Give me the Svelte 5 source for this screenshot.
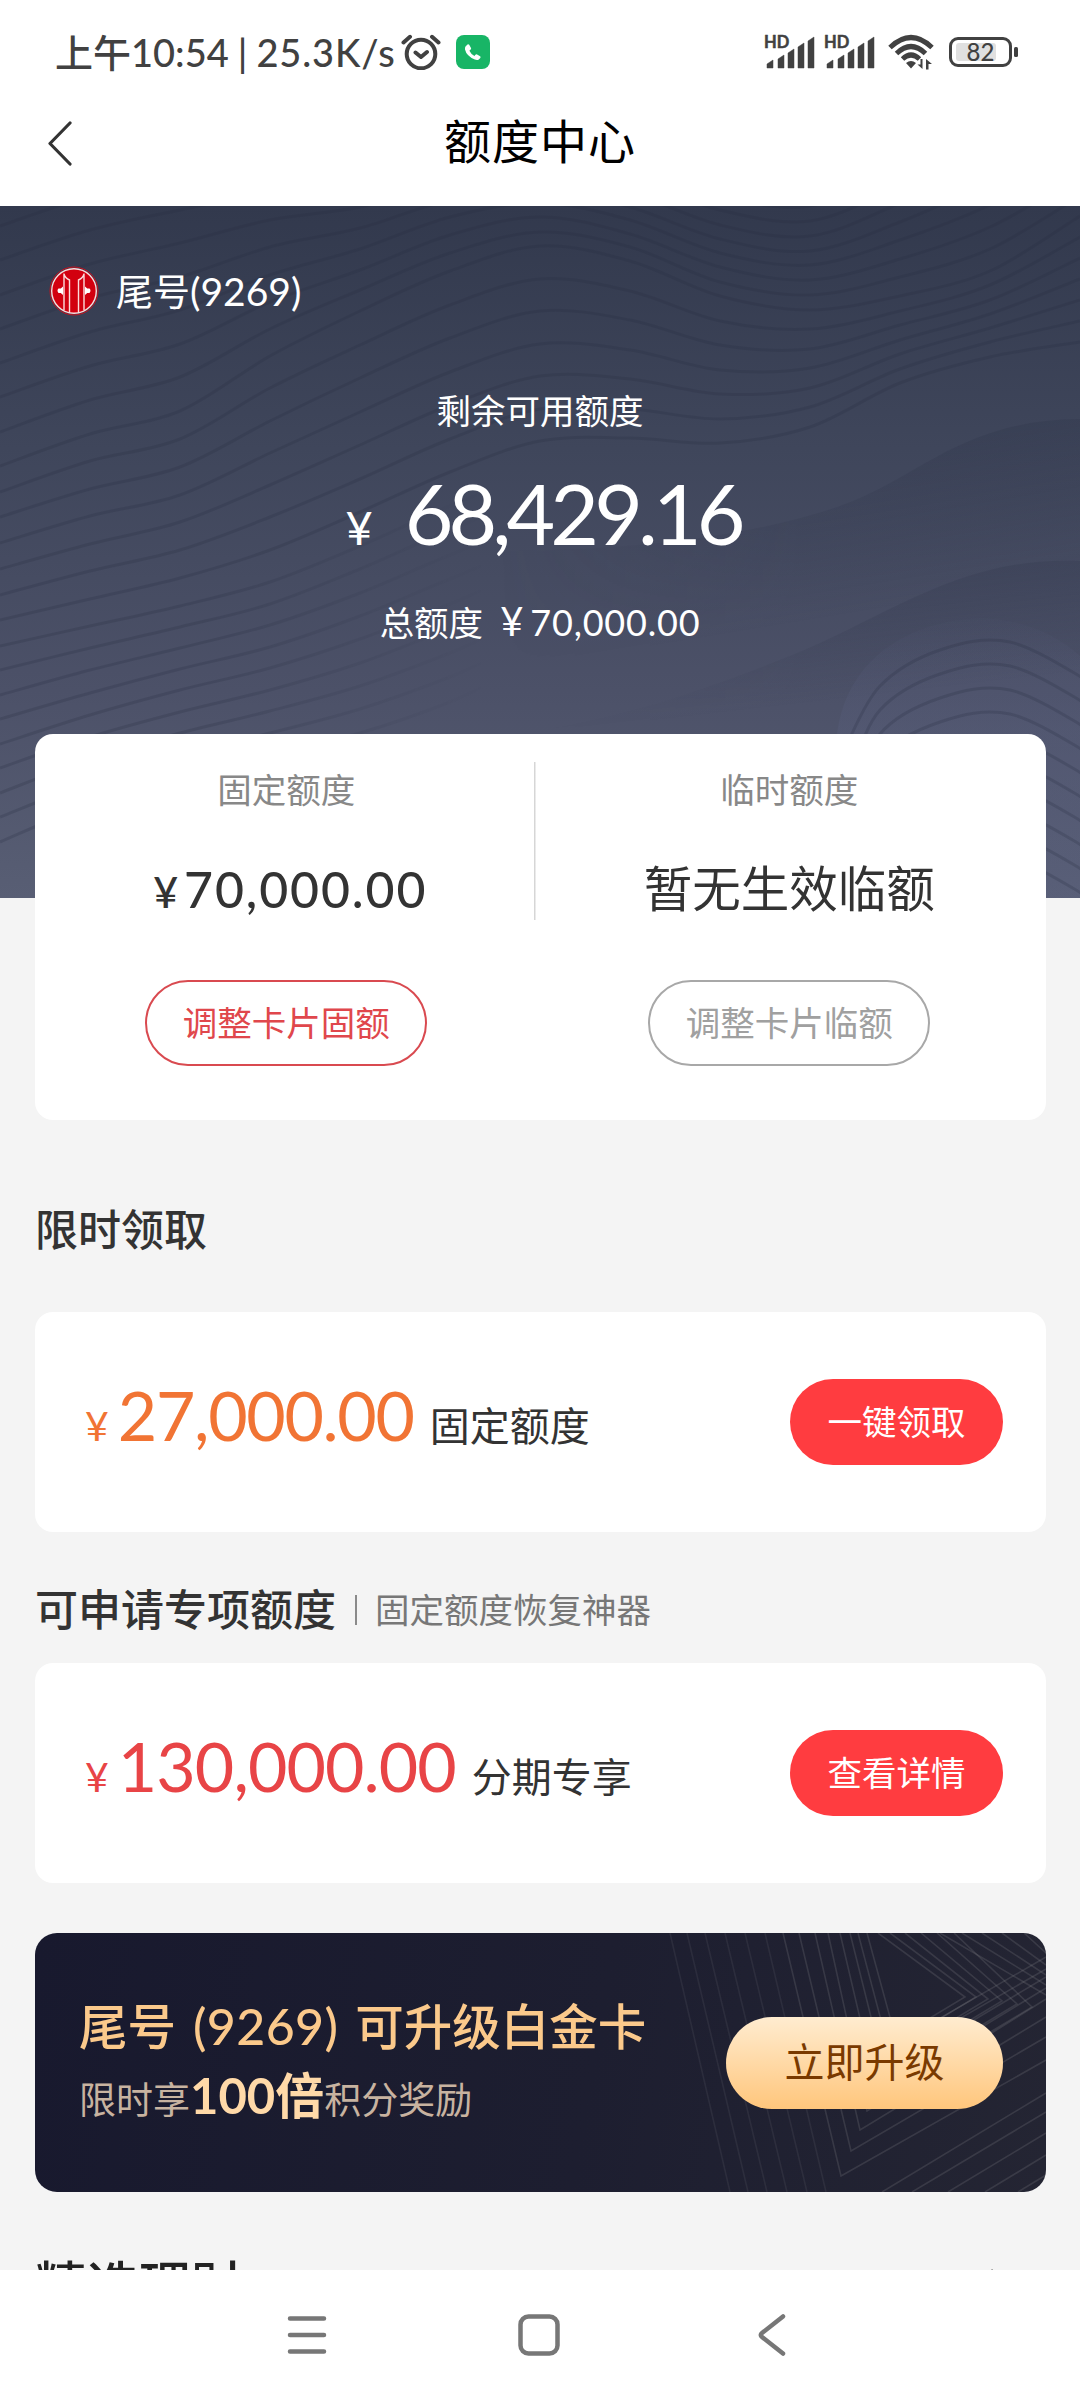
<script>
    const card = { tail: '9269', available: '68,429.16', total: '70,000.00' };

    const quotas = [
        { label: '固定额度', value: '70,000.00', money: true, action: '调整卡片固额', disabled: false },
        { label: '临时额度', value: '暂无生效临额', money: false, action: '调整卡片临额', disabled: true }
    ];

    const claim = { amount: '27,000.00', name: '固定额度', action: '一键领取' };
    const special = { amount: '130,000.00', name: '分期专享', action: '查看详情' };

    const signalBars = [
        { x: 2, h: 8 },
        { x: 13, h: 13 },
        { x: 23, h: 19 },
        { x: 33, h: 25 },
        { x: 43, h: 31 }
    ];

    // Contour lines of the hero: key curves sampled every 90px, blended in between
    const contourKeys = [
        [20, -10, -30, -40, -40, -60, -60, -40, -10, 0, -40, -90, -130],
        [260, 228, 205, 150, 105, 65, 40, 55, 90, 104, 90, 65, 10],
        [440, 420, 400, 376, 340, 300, 268, 262, 262, 240, 192, 165, 157],
        [660, 620, 590, 570, 550, 520, 480, 470, 460, 430, 400, 370, 350]
    ];

    function smoothPath(points) {
        let d = `M${points[0][0]} ${points[0][1]}`;
        for (let i = 0; i < points.length - 1; i++) {
            const before = points[i - 1] || points[i];
            const from = points[i];
            const to = points[i + 1];
            const after = points[i + 2] || to;
            const c1 = [from[0] + (to[0] - before[0]) / 6, from[1] + (to[1] - before[1]) / 6];
            const c2 = [to[0] - (after[0] - from[0]) / 6, to[1] - (after[1] - from[1]) / 6];
            d += `C${c1.join(' ')} ${c2.join(' ')} ${to.join(' ')}`;
        }
        return d;
    }

    const contours = [];
    const steps = [7, 7, 9];
    steps.forEach((count, k) => {
        for (let s = 0; s < count; s++) {
            const t = s / count;
            const ys = contourKeys[k].map((y, i) => Math.round(y + (contourKeys[k + 1][i] - y) * t));
            contours.push({ d: smoothPath(ys.map((y, i) => [i * 90, y])), fading: k === 2 });
        }
    });

    const ridges = [
        'M500 345C640 345 760 328 840 300S960 214 1080 213V692H500z',
        'M500 528C600 520 690 490 790 450S960 350 1080 355V692H500z'
    ];

    const ridgeContours = [0, 1, 2, 3, 4, 5, 6, 7, 8, 9].map((i) =>
        smoothPath([
            [846 + i * 5, 540 + i * 26],
            [880, 480 + i * 24],
            [940, 444 + i * 24],
            [1010, 436 + i * 24],
            [1090, 476 + i * 24]
        ])
    );

    // Banner pattern: slanted lines, nested corners and arrow tips
    const slants = [
        [635, 695], [652, 713], [670, 732], [690, 752], [710, 772], [730, 791]
    ];
    const corners = [
        [748, 806, 243, 127],
        [764, 816, 218, 104],
        [780, 825, 197, 84],
        [793, 832, 178, 66],
        [805, 842, 158, 55],
        [815, 850, 140, 44],
        [823, 856, 125, 36],
        [832, 862, 110, 24]
    ];
    const tips = [
        [843, 930, 64], [855, 941, 64], [870, 953, 66], [886, 967, 68], [902, 982, 71], [919, 997, 74]
    ];
    const rays = [
        [847, 160], [877, 179], [913, 200], [950, 222], [983, 242]
    ];
    const cornerLines = [
        [905, 62], [927, 52], [947, 42], [967, 32], [989, 20]
    ];
</script>

{#snippet signal()}
    <svg class="signal" viewBox="0 0 52 36" aria-hidden="true">
        <text x="-1" y="14" class="hd">HD</text>
        {#each signalBars as bar}
            <path d="M{bar.x} {35 - bar.h + 3} l6 -4 v{bar.h} h-6z" />
        {/each}
    </svg>
{/snippet}

{#snippet offer(item, tone)}
    <div class="panel offer">
        <p class="offer-text {tone}">
            <span class="yen">¥</span><span class="offer-amount">{item.amount}</span>
            <span class="offer-name">{item.name}</span>
        </p>
        <button class="solid-button">{item.action}</button>
    </div>
{/snippet}

<div class="screen">
    <div class="status-bar">
        <span class="clock">上午10:54<span class="bar">|</span><span class="speed">25.3K/s</span></span>
        <svg class="alarm" viewBox="0 0 40 36" aria-hidden="true">
            <circle cx="20" cy="20" r="14.3" />
            <path d="M2.5 8.5 9 2.8M37.5 8.5 31 2.8M14.5 18.5l5.5 4.5 6-5" />
        </svg>
        <svg class="phone" viewBox="0 0 34 34" aria-hidden="true">
            <rect width="34" height="34" rx="8" fill="#18b566" />
            <path d="M9.500 11.500 11.500 9.500q1-.6 1.700.3l1.800 3.100q.4 1-.4 1.700l-1.200 1.200q1.800 3.700 5 5.200l1-1.300q.8-.8 1.700-.3l3 1.800q.9.7.2 1.700l-1.500 1.600q-1.500 1-4 .1Q10.500 21 9 14.500q-.2-1.800.5-3z" fill="#fff" />
        </svg>
        <div class="status-right">
            {@render signal()}
            {@render signal()}
            <svg class="wifi" viewBox="0 0 48 36" aria-hidden="true">
                <path d="M2 13.5Q23 -6.5 44 13.5M8.5 19.5Q23 5.5 37.5 19.5M14.500 25Q23 17 31.500 25" />
                <path class="fill" d="M18 29q5-4 10 0l-5 5.500zM34.500 25v10l-5-4.500h3v-5.500zM38 35.500V25l6 5h-3.500v5.500z" />
            </svg>
            <svg class="battery" viewBox="0 0 70 32" aria-hidden="true">
                <rect x="1.5" y="2.5" width="60" height="27" rx="7.5" fill="none" stroke="#414141" stroke-width="3" />
                <rect x="7" y="7" width="40" height="18" rx="3" fill="#e0e0e0" />
                <rect x="65" y="11" width="4" height="10" rx="1.5" fill="#414141" />
                <text x="31.5" y="24.5" text-anchor="middle">82</text>
            </svg>
        </div>
    </div>

    <header class="title-bar">
        <svg class="back" viewBox="0 0 26 46" aria-hidden="true">
            <path d="M23 2 3 22.5 23 43" />
        </svg>
        <h1>额度中心</h1>
    </header>

    <main>
        <section class="hero">
            <svg class="hero-waves" viewBox="0 0 1080 692" aria-hidden="true">
                <defs>
                    <linearGradient id="sky" gradientUnits="userSpaceOnUse" x1="0" y1="0" x2="0" y2="692">
                        <stop offset="0" stop-color="#32394d" />
                        <stop offset="0.35" stop-color="#3f465b" />
                        <stop offset="0.7" stop-color="#4c5168" />
                        <stop offset="1" stop-color="#585e74" />
                    </linearGradient>
                    <linearGradient id="shade" x1="0.3" y1="0" x2="0.5" y2="1">
                        <stop offset="0" stop-color="#2d3348" stop-opacity="0.35" />
                        <stop offset="0.45" stop-color="#2d3348" stop-opacity="0" />
                    </linearGradient>
                    <linearGradient id="fade" gradientUnits="userSpaceOnUse" x1="0" y1="0" x2="1080" y2="0">
                        <stop offset="0.2" stop-color="#262c40" />
                        <stop offset="0.45" stop-color="#262c40" stop-opacity="0" />
                    </linearGradient>
                    <linearGradient id="reveal" gradientUnits="userSpaceOnUse" x1="500" y1="0" x2="800" y2="0">
                        <stop offset="0" stop-color="#000" />
                        <stop offset="1" stop-color="#fff" />
                    </linearGradient>
                    <mask id="ridge-mask" maskUnits="userSpaceOnUse" x="0" y="0" width="1080" height="692">
                        <rect width="1080" height="692" fill="url(#reveal)" />
                    </mask>
                    <linearGradient id="glow" x1="0" y1="0" x2="0" y2="1">
                        <stop offset="0" stop-color="#5a6080" stop-opacity="0.05" />
                        <stop offset="0.4" stop-color="#5a6080" stop-opacity="0.3" />
                    </linearGradient>
                </defs>
                <rect width="1080" height="692" fill="url(#sky)" />
                <g class="contours">
                    {#each contours as { d, fading }}
                        <path class:fading {d} />
                    {/each}
                </g>
                {#each ridges as d}
                    <path {d} fill="url(#sky)" />
                    <path {d} fill="url(#shade)" mask="url(#ridge-mask)" />
                {/each}
                <path d="M836 692V540C840 460 900 416 980 412Q1040 414 1080 450V692z" fill="url(#glow)" />
                <g class="contours">
                    {#each ridgeContours as d}
                        <path {d} />
                    {/each}
                </g>
            </svg>

            <div class="account">
                <svg class="bank-logo" viewBox="0 0 50 50" aria-hidden="true">
                    <circle cx="25" cy="25" r="24" fill="none" stroke="#c8101c" stroke-width="1" />
                    <circle cx="25" cy="25" r="22.3" fill="#d2000f" stroke="#fbdcdc" stroke-width="1.4" />
                    <path d="M15 7.500V44M35 7.500V44M15 8q1 4 5.500 6V47M35 8q-1 4-5.500 6V47" fill="none" stroke="#fbdcdc" stroke-width="1.4" />
                    <path d="M14 20.500v8.500l-2.200-2H9.500q-2-2.300 0-4.500h2.300zM36 20.500v8.500l2.200-2h2.300q2-2.300 0-4.500h-2.300z" fill="#fff" />
                </svg>
                <span>尾号<span class="tail">({card.tail})</span></span>
            </div>
            <p class="available-label">剩余可用额度</p>
            <p class="available"><span class="yen">¥</span><span class="number">{card.available}</span></p>
            <p class="total">总额度<span class="yen">¥</span><span class="number">{card.total}</span></p>
        </section>

        <section class="panel quotas">
            {#each quotas as quota}
                <div class="quota">
                    <p class="quota-label">{quota.label}</p>
                    <p class="quota-value" class:money={quota.money}>
                        {#if quota.money}<span class="yen">¥</span>{/if}{quota.value}
                    </p>
                    <button class="outline-button" class:disabled={quota.disabled}>{quota.action}</button>
                </div>
            {/each}
        </section>

        <h2 class="claim-title">限时领取</h2>
        {@render offer(claim, 'orange')}

        <h2 class="special-title">可申请专项额度<small>固定额度恢复神器</small></h2>
        {@render offer(special, 'red')}

        <section class="banner">
            <svg class="banner-lines" viewBox="0 0 1011 259" aria-hidden="true">
                {#each slants as [top, bottom]}
                    <path d="M{top} 0L{bottom} 259" opacity="0.6" />
                {/each}
                {#each corners as [top, x, y, edge]}
                    <path d="M{top} 0L{x} {y}L1011 {edge}" />
                {/each}
                {#each tips as [top, x, y]}
                    <path d="M{top} 0L{x} {y}L{x - 100} {y + 60}" />
                {/each}
                {#each rays as [x, edge]}
                    <path d="M{x} 259L1011 {edge}" />
                {/each}
                {#each cornerLines as [x, edge]}
                    <path d="M{x} 0L1011 {edge}" />
                {/each}
            </svg>
            <div class="banner-text">
                <p class="banner-title">尾号<span class="tail">({card.tail})</span>可升级白金卡</p>
                <p class="banner-sub">限时享<strong>100倍</strong>积分奖励</p>
            </div>
            <button class="gold-button">立即升级</button>
        </section>

        <div class="wealth">
            <h2>精选理财</h2>
            <svg viewBox="0 0 20 34" aria-hidden="true"><path d="M3 2l14 15L3 32" /></svg>
        </div>
    </main>

    <nav class="system-nav">
        <svg viewBox="0 0 44 44" aria-hidden="true"><path d="M5 5.5h34M5 22h34M5 38.5h34" /></svg>
        <svg viewBox="0 0 44 44" aria-hidden="true"><rect x="3.5" y="3.5" width="37" height="37" rx="8" /></svg>
        <svg viewBox="0 0 44 44" aria-hidden="true"><path d="M34 3.5 13 20q-2.5 2 0 4l21 16.5" /></svg>
    </nav>
</div>

<style>
    :global(body) {
        background: #f4f4f4;
    }

    .screen {
        color: #333333;
        display: flex;
        flex-direction: column;
        font-family: Lato, 'Noto Sans CJK SC', sans-serif;
        height: 2400px;
        overflow: hidden;
        width: 1080px;
    }

    p,
    h1,
    h2 {
        font-weight: 400;
        margin: 0;
        white-space: nowrap;
    }

    button {
        align-items: center;
        border: 0;
        box-sizing: border-box;
        display: flex;
        flex-shrink: 0;
        font-family: inherit;
        justify-content: center;
        padding: 0 0 4px;
        white-space: nowrap;
    }

    .status-bar {
        align-items: center;
        background: #ffffff;
        color: #414141;
        display: flex;
        flex-shrink: 0;
        height: 104px;
        padding: 0 61px 0 55px;
    }

    .clock {
        font-size: 38px;
        font-weight: 500;
        line-height: 102px;
        white-space: nowrap;
        width: 346px;
    }

    .bar {
        margin: 0 9px;
    }

    .speed {
        letter-spacing: 0.9px;
    }

    .alarm {
        fill: none;
        height: 36px;
        stroke: #414141;
        stroke-linecap: round;
        stroke-linejoin: round;
        stroke-width: 4;
        width: 40px;
    }

    .phone {
        height: 34px;
        margin-left: 15px;
        width: 34px;
    }

    .status-right {
        align-items: center;
        display: flex;
        margin-left: auto;
    }

    .signal {
        fill: #414141;
        height: 36px;
        margin-right: 8px;
        overflow: visible;
        stroke: #414141;
        stroke-linejoin: round;
        stroke-width: 0.5;
        width: 52px;
    }

    .hd {
        font-size: 16.5px;
        font-weight: 700;
    }

    .wifi {
        fill: none;
        height: 36px;
        margin: 0 13px 0 3px;
        stroke: #414141;
        stroke-width: 5;
        width: 48px;
    }

    .wifi .fill {
        fill: #414141;
        stroke: none;
    }

    .battery {
        fill: #414141;
        font-size: 24px;
        font-weight: 500;
        height: 32px;
        width: 70px;
    }

    .title-bar {
        align-items: center;
        background: #ffffff;
        color: #000000;
        display: grid;
        flex-shrink: 0;
        grid-template-columns: 1fr auto 1fr;
        height: 102px;
        padding: 0 47px;
    }

    .back {
        fill: none;
        height: 46px;
        margin-top: -23px;
        stroke: #333333;
        stroke-linecap: round;
        stroke-linejoin: round;
        stroke-width: 3.2;
        width: 26px;
    }

    h1 {
        font-size: 47px;
        letter-spacing: 1px;
        line-height: 78px;
        margin-top: -28px;
    }

    main {
        background: #f4f4f4;
        display: flex;
        flex-direction: column;
        height: 2064px;
        overflow: hidden;
        padding: 0 34px 0 35px;
    }

    .hero {
        color: #ffffff;
        flex-shrink: 0;
        height: 528px;
        margin: 0 -34px 0 -35px;
        position: relative;
        text-align: center;
    }

    .hero-waves {
        height: 692px;
        left: 0;
        position: absolute;
        top: 0;
        width: 1080px;
    }

    .contours {
        fill: none;
        opacity: 0.22;
        stroke: #262c40;
        stroke-width: 3;
    }

    .contours .fading {
        stroke: url(#fade);
    }

    .account,
    .available-label,
    .available,
    .total {
        position: relative;
    }

    .account {
        align-items: center;
        display: flex;
        font-size: 37px;
        gap: 17px;
        height: 50px;
        line-height: 48px;
        padding: 60px 0 0 49px;
    }

    .bank-logo {
        height: 50px;
        width: 50px;
    }

    .account .tail {
        font-size: 39px;
    }

    .available-label {
        font-size: 34.5px;
        line-height: 50px;
        margin-top: 70px;
    }

    .available {
        align-items: baseline;
        display: flex;
        height: 90px;
        justify-content: center;
        line-height: 90px;
        margin-top: 32px;
        padding-left: 6px;
    }

    .available .yen {
        font-size: 47px;
        margin-right: 32px;
    }

    .available .number {
        font-size: 84px;
        letter-spacing: -4.9px;
    }

    .total {
        font-size: 34.5px;
        line-height: 50px;
        margin-top: 38px;
    }

    .total .yen {
        font-size: 40px;
        margin: 0 7px 0 17px;
    }

    .total .number {
        font-size: 36px;
        letter-spacing: 0.8px;
    }

    .panel {
        background: #ffffff;
        border-radius: 18px;
        flex-shrink: 0;
    }

    .quotas {
        display: grid;
        grid-template-columns: 1fr 1fr;
        height: 386px;
        position: relative;
    }

    .quota {
        align-items: center;
        display: flex;
        flex-direction: column;
        padding: 31px 8px 0 0;
    }

    .quota:first-child {
        background: linear-gradient(#d6d6d6, #d6d6d6) no-repeat 499px 28px / 1.5px 158px;
        padding-right: 3px;
    }

    .quota-label {
        color: #888888;
        font-size: 34.5px;
        line-height: 50px;
    }

    .quota-value {
        font-size: 48.5px;
        height: 60px;
        line-height: 58px;
        margin-top: 44px;
    }

    .quota-value.money {
        font-size: 50px;
        font-weight: 500;
        letter-spacing: 1.9px;
        line-height: 60px;
        padding-left: 8px;
    }

    .quota-value .yen {
        font-size: 43px;
        margin-right: 4px;
    }

    .outline-button {
        background: none;
        border: 2px solid #d94a50;
        border-radius: 43px;
        color: #e0474c;
        font-size: 34.5px;
        height: 86px;
        margin-top: 61px;
        width: 282px;
    }

    .outline-button.disabled {
        border-color: #a8a8a8;
        color: #a0a0a0;
    }

    h2 {
        font-size: 43px;
        font-weight: 500;
        line-height: 60px;
    }

    .claim-title {
        margin: 80px 0 52px;
    }

    .special-title {
        align-items: center;
        display: flex;
        margin: 48px 0 23px;
    }

    .special-title small {
        border-left: 2px solid #8a8a8a;
        color: #777777;
        font-size: 34.5px;
        font-weight: 400;
        line-height: 30px;
        margin-left: 19px;
        padding-left: 18px;
    }

    .offer {
        align-items: center;
        display: flex;
        height: 220px;
        justify-content: space-between;
        padding: 0 43px 0 50px;
    }

    .offer-text {
        align-items: baseline;
        display: flex;
        height: 80px;
        line-height: 80px;
        padding-bottom: 15px;
    }

    .offer-text .yen {
        font-size: 41px;
        margin-right: 9px;
    }

    .offer-amount {
        font-size: 68px;
        letter-spacing: -1.3px;
    }

    .red .offer-amount {
        letter-spacing: -0.9px;
    }

    .offer-name {
        color: #333333;
        font-size: 40px;
        margin-left: 16px;
    }

    .orange {
        color: #f17434;
    }

    .red {
        color: #e84446;
    }

    .solid-button {
        background: #ff3c40;
        border-radius: 43px;
        color: #ffffff;
        font-size: 34.5px;
        height: 86px;
        width: 213px;
    }

    .banner {
        align-items: center;
        background: linear-gradient(100deg, #18192e, #1d1e30 55%, #242533);
        border-radius: 22px;
        box-sizing: border-box;
        display: flex;
        flex-shrink: 0;
        height: 259px;
        justify-content: space-between;
        margin-top: 50px;
        overflow: hidden;
        padding: 0 43px 0 44px;
        position: relative;
    }

    .banner-lines {
        fill: none;
        height: 259px;
        left: 0;
        position: absolute;
        stroke: #85858c;
        stroke-opacity: 0.23;
        stroke-width: 1.6;
        top: 0;
        width: 1011px;
    }

    .banner-text,
    .gold-button {
        position: relative;
    }

    .banner-title {
        color: #fbc98b;
        font-size: 48.5px;
        font-weight: 500;
        line-height: 60px;
    }

    .banner-title .tail {
        font-size: 50px;
        letter-spacing: 0.4px;
        margin: 0 17px;
    }

    .banner-sub {
        color: #c8b3a0;
        font-size: 37px;
        line-height: 60px;
        margin-top: 9px;
    }

    .banner-sub strong {
        color: #ffd9a8;
        font-size: 49px;
        font-weight: 700;
    }

    .gold-button {
        background: linear-gradient(#ffecd0, #ffc67c);
        border-radius: 46px;
        color: #7a3a00;
        font-size: 40px;
        height: 92px;
        padding-bottom: 5px;
        width: 277px;
    }

    .wealth {
        align-items: center;
        display: flex;
        justify-content: space-between;
        margin-top: 63px;
        padding-right: 38px;
    }

    .wealth h2 {
        color: #222222;
        font-size: 52px;
        font-weight: 500;
        line-height: 60px;
    }

    .wealth svg {
        fill: none;
        height: 36px;
        stroke: #777777;
        stroke-width: 3;
        width: 20px;
    }

    .system-nav {
        align-items: center;
        background: #ffffff;
        display: flex;
        flex-shrink: 0;
        gap: 188px;
        height: 130px;
        justify-content: center;
        padding-right: 3px;
    }

    .system-nav svg {
        fill: none;
        height: 44px;
        stroke: #777777;
        stroke-linecap: round;
        stroke-linejoin: round;
        stroke-width: 4.5;
        width: 44px;
    }
</style>
